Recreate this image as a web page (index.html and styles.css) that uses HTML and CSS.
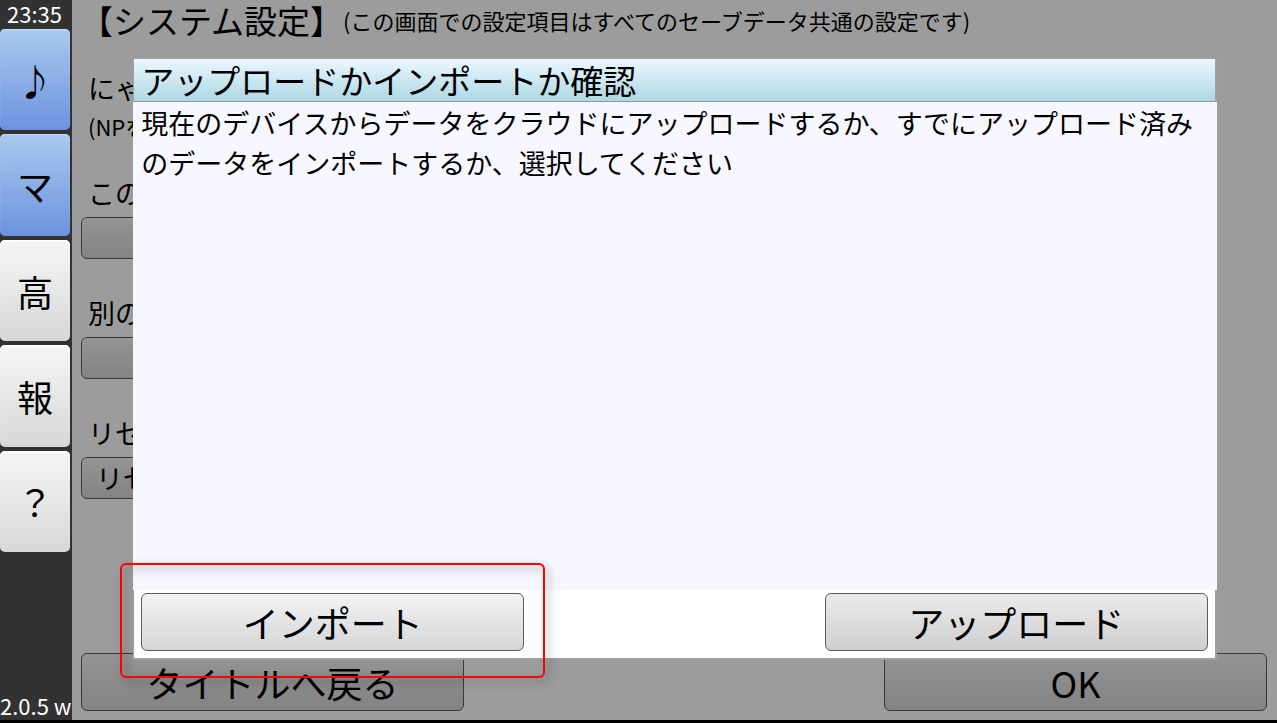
FILE: index.html
```html
<!DOCTYPE html>
<html lang="ja">
<head>
<meta charset="utf-8">
<meta name="viewport" content="width=device-width, initial-scale=1">
<title>システム設定</title>
<link rel="stylesheet" href="styles.css">
</head>
<body>
<div class="app">
  <aside class="sidebar">
    <time class="clock">23:35</time>
    <nav class="side-nav">
      <button class="side-btn side-btn-on" type="button">♪</button>
      <button class="side-btn side-btn-on" type="button">マ</button>
      <button class="side-btn" type="button">高</button>
      <button class="side-btn" type="button">報</button>
      <button class="side-btn" type="button">？</button>
    </nav>
    <span class="version">2.0.5 w</span>
  </aside>
  <main class="main">
    <header class="page-head">
      <h1 class="page-title">【システム設定】</h1>
      <span class="page-note">(この画面での設定項目はすべてのセーブデータ共通の設定です)</span>
    </header>
    <div class="settings">
      <section class="setting setting-intro">
        <p class="label">にゃ</p>
        <p class="sublabel">(NPを</p>
      </section>
      <section class="setting">
        <p class="label" id="label-this">この</p>
        <button class="btn btn-small" type="button" aria-labelledby="label-this"></button>
      </section>
      <section class="setting">
        <p class="label" id="label-other">別の</p>
        <button class="btn btn-small" type="button" aria-labelledby="label-other"></button>
      </section>
      <section class="setting">
        <p class="label">リセ</p>
        <button class="btn btn-small" type="button">リセ</button>
      </section>
    </div>
    <footer class="page-foot">
      <button class="btn btn-large" type="button">タイトルへ戻る</button>
      <button class="btn btn-large" type="button">OK</button>
    </footer>
    <div class="overlay">
      <div class="dialog" role="dialog" aria-labelledby="dialog-title">
        <h2 class="dialog-title" id="dialog-title">アップロードかインポートか確認</h2>
        <p class="dialog-body">現在のデバイスからデータをクラウドにアップロードするか、すでにアップロード済みのデータをインポートするか、選択してください</p>
        <div class="dialog-foot">
          <div class="marked">
            <button class="btn btn-large" type="button">インポート</button>
            <span class="marker"></span>
          </div>
          <button class="btn btn-large btn-hover" type="button">アップロード</button>
        </div>
      </div>
    </div>
  </main>
</div>
</body>
</html>
```
FILE: styles.css
```css
* {
  box-sizing: border-box;
}

body {
  margin: 0;
  background: #000;
  color: #000;
  font-family: "Noto Sans CJK JP", sans-serif;
}

h1, h2, p {
  margin: 0;
  font-weight: 400;
}

button {
  margin: 0;
  color: inherit;
  font-family: inherit;
}

.app {
  display: flex;
  height: 100vh;
  padding-bottom: 3px;
}

/* Sidebar */
.sidebar {
  flex: none;
  width: 72px;
  display: flex;
  flex-direction: column;
  background: #323232;
  color: #fff;
}

.clock {
  height: 29px;
  font-size: 22px;
  line-height: 26px;
  text-align: center;
  padding-right: 3px;
}

.side-nav {
  height: 523px;
  width: 70px;
  display: flex;
  flex-direction: column;
  gap: 4px;
  color: #000;
}

.side-btn {
  flex: 1;
  padding: 0;
  border: 0;
  border-radius: 5px;
  background: linear-gradient(#f4f4f4, #e6e8e7 50%, #d5d7d9);
  box-shadow: inset 0 2px 1px #fff;
  font-size: 36px;
  line-height: 52px;
}

.side-btn-on {
  background: linear-gradient(#a8caee, #6e92df);
  box-shadow: inset 0 1px 1px #c4dcf6;
}

.version {
  margin-top: auto;
  font-size: 22px;
  line-height: 30px;
  white-space: nowrap;
}

/* Settings page */
.main {
  position: relative;
  flex: 1;
  min-width: 0;
  display: flex;
  flex-direction: column;
  background: #fff;
}

.page-head {
  display: flex;
  align-items: center;
  height: 40px;
  padding-left: 8px;
  white-space: nowrap;
}

.page-title {
  font-size: 33px;
  line-height: 40px;
}

.page-note {
  font-size: 22px;
  line-height: 40px;
}

.settings {
  flex: 1;
  display: flex;
  flex-direction: column;
  gap: 35px;
  padding: 29px 9px 0;
}

.setting {
  display: flex;
  flex-direction: column;
  align-items: flex-start;
  gap: 5px;
}

.setting-intro {
  gap: 0;
  margin-bottom: -6px;
}

.label {
  padding-left: 7px;
  font-size: 27px;
  line-height: 38px;
}

.sublabel {
  padding-left: 7px;
  font-size: 22px;
  line-height: 38px;
}

.btn {
  border: 1px solid #5a5c5c;
  border-radius: 6px;
  background: linear-gradient(#f3f3f3, #e3e4e5 50%, #d6d7d9);
  white-space: nowrap;
}

.btn-small {
  height: 42px;
  min-width: 84px;
  padding: 0 14px;
  font-size: 27px;
  line-height: 38px;
}

.btn-large {
  width: 383px;
  height: 58px;
  padding: 0;
  font-size: 36px;
  line-height: 52px;
}

.btn-hover {
  background: linear-gradient(#ebebeb, #cecfd1);
}

.page-foot {
  display: flex;
  justify-content: space-between;
  padding: 0 10px 9px 9px;
}

/* Dialog */
.overlay {
  position: absolute;
  inset: 0;
  display: flex;
  align-items: center;
  justify-content: center;
  padding: 0 0 2px 1px;
  background: rgba(0, 0, 0, 0.39);
}

.dialog {
  width: 90%;
  height: 602px;
  display: flex;
  flex-direction: column;
  border: solid #a0a0a0;
  border-width: 1px 2px 2px 1px;
  background: #fff;
}

.dialog-title {
  height: 43px;
  padding-left: 7px;
  border-bottom: 1px solid #8f999c;
  background: linear-gradient(#ecf7ff, #add8e4);
  font-size: 33px;
  line-height: 42px;
}

.dialog-body {
  flex: 1;
  margin: 0 -2px 0 -1px;
  padding: 1px 8px;
  background: #f7f7ff;
  font-size: 27px;
  line-height: 40px;
}

.dialog-foot {
  display: flex;
  justify-content: space-between;
  padding: 3px 7px 7px;
}

.marked {
  position: relative;
  display: flex;
}

.marker {
  position: absolute;
  inset: -30px -21px -27px;
  border: 2px solid #f00;
  border-radius: 6px;
  filter: drop-shadow(4px 4px 4px rgba(0, 0, 0, 0.4));
  pointer-events: none;
}
```
